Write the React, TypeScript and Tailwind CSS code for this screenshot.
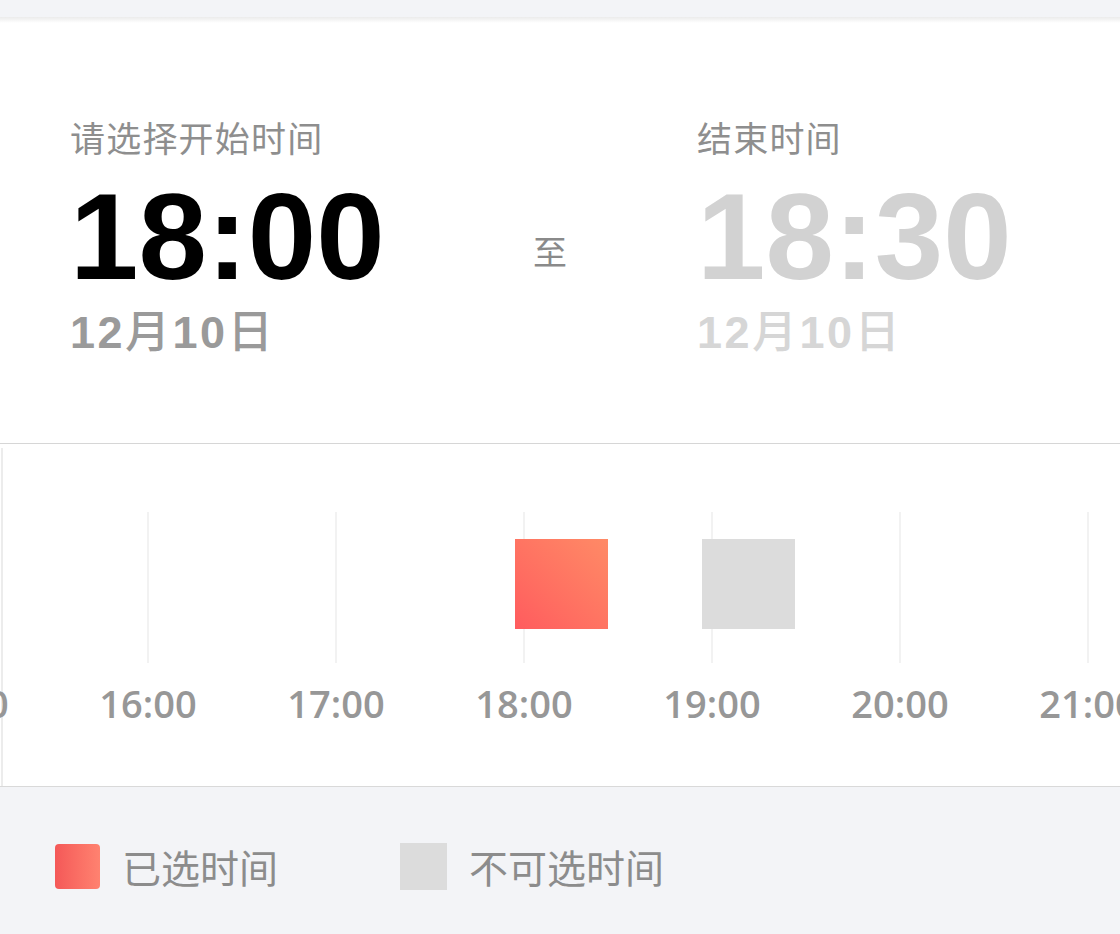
import React from "react";

const LATIN = { fontFamily: '"Liberation Sans", "Noto Sans CJK SC", sans-serif' };
const CJK = { fontFamily: '"Noto Sans CJK SC", "Liberation Sans", sans-serif' };
const LABEL = { fontFamily: '"Open Sans", "Liberation Sans", sans-serif' };

const hours = ["15:00", "16:00", "17:00", "18:00", "19:00", "20:00", "21:00"];

export default function App() {
  return (
    <div className="w-[1120px] h-[934px] overflow-hidden bg-[#f3f4f7]" style={LATIN}>
      {/* top band */}
      <div className="h-[17px] bg-[#f3f4f7]" />
      <div className="h-[6px] bg-gradient-to-b from-[#ebebeb] to-white" />

      {/* header */}
      <div className="h-[421px] bg-white border-b border-[#d6d6d6] pl-[70px] pt-[96px] flex items-start">
        <div className="w-[463px] flex flex-col">
          <div className="text-[35px] leading-none text-[#8e8e8e] h-[35px] tracking-[1.2px]" style={CJK}>
            请选择开始时间
          </div>
          <div className="mt-[21px] text-[123px] leading-none font-bold text-black h-[123px]">18:00</div>
          <div className="mt-[8px] text-[45px] leading-none font-bold text-[#9a9a9a] tracking-[2.5px]">
            12<span style={CJK} className="font-medium">月</span>10<span style={CJK} className="font-medium">日</span>
          </div>
        </div>
        <div className="w-[164px] mt-[115px] text-[34px] leading-none text-[#8a8a8a]" style={CJK}>
          至
        </div>
        <div className="flex flex-col">
          <div className="text-[35px] leading-none text-[#8e8e8e] h-[35px] tracking-[1.2px]" style={CJK}>
            结束时间
          </div>
          <div className="mt-[21px] text-[123px] leading-none font-bold text-[#d2d2d2] h-[123px]">18:30</div>
          <div className="mt-[8px] text-[45px] leading-none font-bold text-[#d6d6d6] tracking-[2.5px]">
            12<span style={CJK} className="font-medium">月</span>10<span style={CJK} className="font-medium">日</span>
          </div>
        </div>
      </div>

      {/* timeline */}
      <div className="relative h-[343px] bg-white border-b border-[#d9d9d9] overflow-hidden">
        <div className="absolute left-[1px] top-[4px] bottom-0 w-[2px] bg-[#ececec]" />
        {hours.map((h, i) => {
          const x = -40 + i * 188;
          return (
            <React.Fragment key={h}>
              <div
                className="absolute top-[68px] h-[151px] w-[2px] bg-[#f2f2f2]"
                style={{ left: x - 1 }}
              />
              <div
                className="absolute top-[240px] w-[140px] text-center text-[38px] leading-none font-semibold text-[#979797]"
                style={{ ...LABEL, left: x - 70 }}
              >
                {h}
              </div>
            </React.Fragment>
          );
        })}
        <div className="absolute left-[515px] top-[95px] w-[93px] h-[90px] bg-gradient-to-tr from-[#ff5b5e] to-[#ff8a66]" />
        <div className="absolute left-[702px] top-[95px] w-[93px] h-[90px] bg-[#dcdcdc]" />
      </div>

      {/* legend */}
      <div className="h-[147px] bg-[#f3f4f7] flex items-center pl-[55px] pt-[12px]">
        <div className="w-[345px] flex items-center">
          <div className="w-[45px] h-[45px] rounded-[4px] bg-gradient-to-r from-[#f45858] to-[#ff8270]" />
          <div className="ml-[22px] text-[39px] leading-none text-[#8c8c8c]" style={CJK}>
            已选时间
          </div>
        </div>
        <div className="flex items-center">
          <div className="w-[47px] h-[47px] bg-[#dcdcdc]" />
          <div className="ml-[22px] text-[39px] leading-none text-[#8c8c8c]" style={CJK}>
            不可选时间
          </div>
        </div>
      </div>
    </div>
  );
}
